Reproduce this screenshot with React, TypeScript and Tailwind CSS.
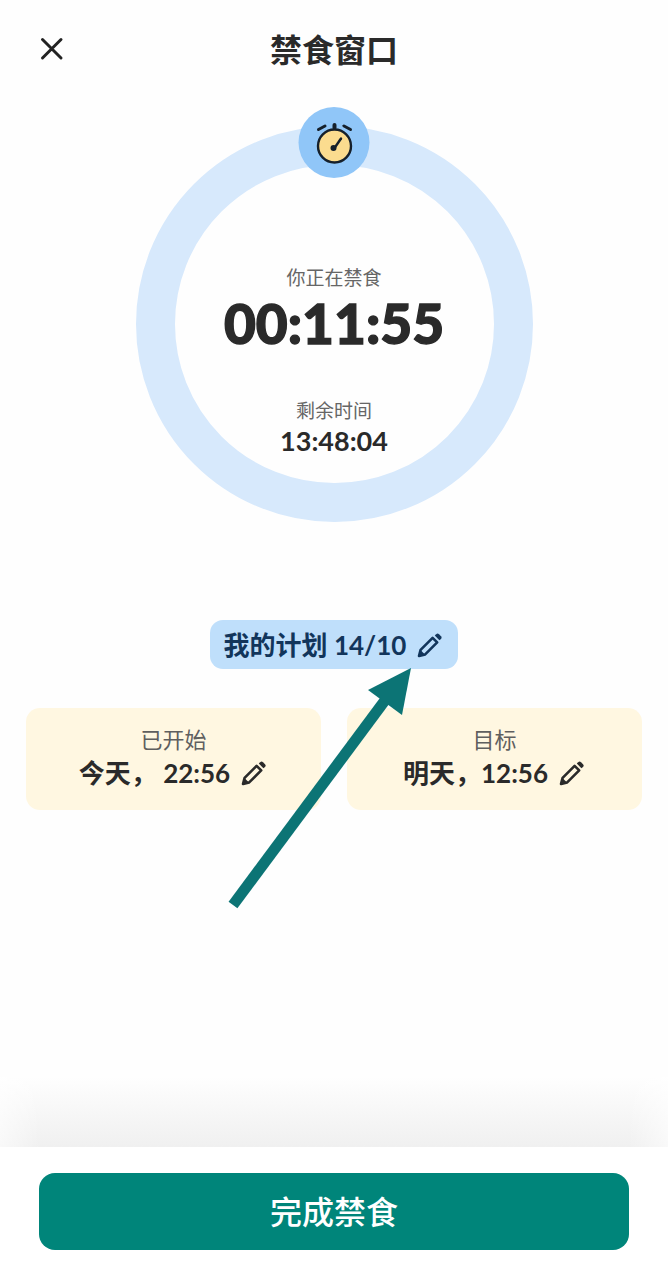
import React from "react";

const font = { fontFamily: 'Lato, "Noto Sans CJK SC", sans-serif' };

function Pencil({ size = 28, color = "#2a2a2a" }: { size?: number; color?: string }) {
  return (
    <svg width={size} height={size} viewBox="0 0 28 28" fill="none">
      <path d="M3 25 L4.6 18.8 L16.6 6.8 L21.2 11.4 L9.2 23.4 Z" stroke={color} strokeWidth="2.6" strokeLinejoin="round" />
      <path d="M3 25 L4.4 19 L9 23.6 Z" fill={color} />
      <path d="M18.8 4.6 L20.2 3.2 a2 2 0 0 1 2.8 0 L25 5.2 a2 2 0 0 1 0 2.8 L23.4 9.2 Z" fill={color} />
    </svg>
  );
}

function AlarmIcon() {
  return (
    <svg width="44" height="48" viewBox="0 0 44 48" fill="none">
      <circle cx="22" cy="27" r="16.5" fill="#fbdc8f" stroke="#15202b" strokeWidth="2.4" />
      <path d="M22 6 L22 9" stroke="#15202b" strokeWidth="4" strokeLinecap="round" />
      <path d="M6 10.5 L12.5 7" stroke="#15202b" strokeWidth="3" strokeLinecap="round" />
      <path d="M38 10.5 L31.5 7" stroke="#15202b" strokeWidth="3" strokeLinecap="round" />
      <path d="M22 29 L28.5 19.5" stroke="#15202b" strokeWidth="2.4" strokeLinecap="round" />
      <circle cx="21" cy="29" r="3" fill="#15202b" />
    </svg>
  );
}

function Card({ label, value }: { label: string; value: string }) {
  return (
    <div className="flex-1 h-[102px] rounded-[14px] bg-[#fff7e1] flex flex-col items-center justify-center">
      <span className="text-[22px] leading-[30px] text-[#5f5f5f] -mt-[2px]">{label}</span>
      <div className="flex items-center gap-[10px]">
        <span className="text-[26px] leading-[36px] font-bold text-[#2a2a2a] whitespace-pre">{value}</span>
        <Pencil size={28} />
      </div>
    </div>
  );
}

export default function App() {
  return (
    <div className="relative w-[668px] h-[1280px] bg-[#fefefe] overflow-hidden flex flex-col text-[#2a2a2a]" style={font}>
      <header className="relative h-[100px] flex items-center justify-center shrink-0">
        <button className="absolute left-[39px] top-[36px]" aria-label="close">
          <svg width="26" height="26" viewBox="0 0 26 26" fill="none">
            <path d="M3.5 3.5 L22 22 M22 3.5 L3.5 22" stroke="#222" strokeWidth="3" strokeLinecap="round" />
          </svg>
        </button>
        <span className="text-[32px] font-bold leading-none">禁食窗口</span>
      </header>

      <div className="relative self-center mt-[26px] w-[397px] h-[396px] rounded-full border-[39px] border-[#d7e9fc] flex flex-col items-center shrink-0">
        <div className="absolute left-1/2 -translate-x-1/2 top-[-58px] w-[71px] h-[71px] rounded-full bg-[#90c6f8] flex items-center justify-center">
          <AlarmIcon />
        </div>
        <span className="mt-[98px] text-[19px] leading-[30px] text-[#666]">你正在禁食</span>
        <span className="text-[55px] leading-[60px] font-black text-[#2a2a2a] [-webkit-text-stroke:1.4px_#2a2a2a]">00:11:55</span>
        <span className="mt-[44px] text-[19px] leading-[28px] text-[#666]">剩余时间</span>
        <span className="text-[27px] leading-[32px] font-bold">13:48:04</span>
      </div>

      <div className="self-center mt-[98px] h-[49px] w-[248px] rounded-[13px] bg-[#bfdffb] flex items-center justify-center gap-[10px] shrink-0">
        <span className="text-[26px] leading-none font-bold text-[#12355b] whitespace-pre">我的计划 14/10</span>
        <Pencil size={28} color="#12355b" />
      </div>

      <div className="flex gap-[26px] px-[26px] mt-[39px] shrink-0">
        <Card label="已开始" value="今天， 22:56" />
        <Card label="目标" value="明天，12:56" />
      </div>

      <div className="relative mt-auto h-[70px] bg-gradient-to-b from-[#fefefe] to-[#f0f0f0] shrink-0">
        <div className="absolute inset-y-0 left-0 w-[40px] bg-gradient-to-r from-white/60 to-transparent" />
        <div className="absolute inset-y-0 right-0 w-[40px] bg-gradient-to-l from-white/60 to-transparent" />
      </div>
      <footer className="h-[133px] bg-white px-[39px] pt-[26px] shrink-0">
        <button className="w-full h-[77px] rounded-[16px] bg-[#00857a] text-white text-[32px] font-medium flex items-center justify-center">
          完成禁食
        </button>
      </footer>

      <svg className="absolute left-[220px] top-[660px] pointer-events-none" width="200" height="256" viewBox="220 660 200 256" fill="none">
        <path d="M233 905 L386 699" stroke="#0c7475" strokeWidth="11" />
        <path d="M411 668 L368 690 L402 715 Z" fill="#0c7475" />
      </svg>
    </div>
  );
}
